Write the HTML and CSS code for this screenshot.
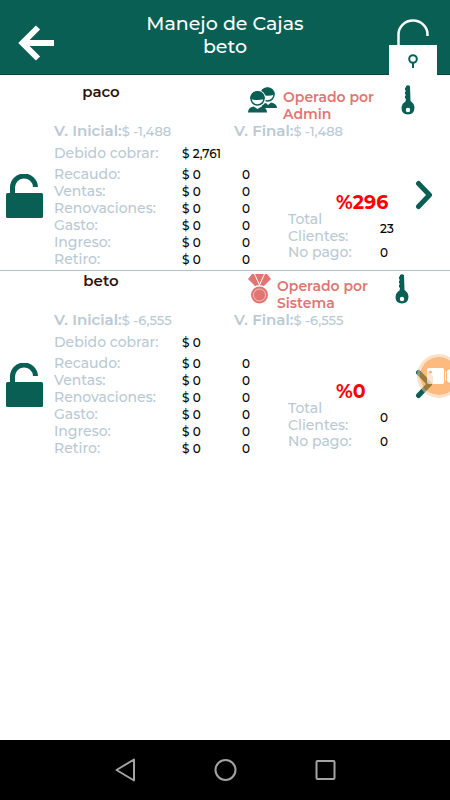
FILE: index.html
```html
<!DOCTYPE html>
<html lang="es">
<head>
<meta charset="utf-8">
<meta name="viewport" content="width=device-width, initial-scale=1">
<title>Manejo de Cajas</title>
<link rel="stylesheet" href="styles.css">
</head>
<body>
<svg class="defs" aria-hidden="true">
  <symbol id="open-lock" viewBox="0 0 38 44">
    <path d="M6.500 20V14A11 11 0 0 1 29.500 13" fill="none" stroke="currentColor" stroke-width="5"/>
    <rect y="19" width="37" height="25" rx="1.500" fill="currentColor"/>
  </symbol>
  <symbol id="key" viewBox="0 0 14 30">
    <path fill="currentColor" fill-rule="evenodd" d="M5 1Q7-.5 9 1L9.500 16Q13.500 18.500 13.500 23Q13 29.500 7 29.500Q.5 29 .5 23Q.7 18.500 4.500 16.500L5 14L4 13V11L5 10L4 9V7L5 6L4 5V3L5 2ZM7 22.800A2.200 2.200 0 1 0 7 27.200A2.200 2.200 0 1 0 7 22.800Z"/>
  </symbol>
  <symbol id="chevron" viewBox="0 0 18 30">
    <path d="M3.500 3.500L14.500 15L3.500 26.500" fill="none" stroke="currentColor" stroke-width="5" stroke-linecap="round" stroke-linejoin="round"/>
  </symbol>
</svg>

<header class="topbar">
  <button class="icon-button" aria-label="Volver">
    <svg width="36" height="36" viewBox="0 0 36 36"><path d="M20 2.500L4.500 18L20 33.500M5 18H36" fill="none" stroke="#fff" stroke-width="6"/></svg>
  </button>
  <h1 class="title">Manejo de Cajas<br>beto</h1>
  <button class="icon-button topbar-lock" aria-label="Abrir cajas">
    <svg width="48" height="56" viewBox="0 0 48 56">
      <path d="M9.500 27V15.500A14.500 14 0 0 1 38.500 15.500V17" fill="none" stroke="#fff" stroke-width="2.500"/>
      <path d="M0 26H48V56H0Z" fill="#fff"/>
      <circle cx="24" cy="40" r="3.800" fill="none" stroke="#0a5f54" stroke-width="2"/>
      <path d="M24 43V49" stroke="#0a5f54" stroke-width="2"/>
    </svg>
  </button>
</header>

<main class="boxes">
  <article class="box">
    <button class="icon-button box-lock" aria-label="Abrir caja paco"><svg width="38" height="44"><use href="#open-lock"/></svg></button>
    <div class="box-content">
      <div class="box-head">
        <h2 class="box-name">paco</h2>
        <div class="operator">
          <svg class="operator-icon" width="29" height="28" viewBox="0 0 29 28">
            <circle cx="19.500" cy="9.500" r="6.500" fill="#fff" stroke="#0a5f54" stroke-width="1.500"/>
            <path d="M12.500 9.500Q13 3 19.500 2.500Q26 3 26.500 9.500Q20 12 12.500 9.500Z" fill="#0a5f54"/>
            <path d="M14 23V19L18 18L20 20L23 17.500Q29 18.500 29 23Z" fill="#0a5f54"/>
            <circle cx="9.500" cy="13.500" r="8.500" fill="#fff"/>
            <circle cx="9.500" cy="13.500" r="6.500" fill="#fff" stroke="#0a5f54" stroke-width="1.500"/>
            <path d="M2.500 14Q2 6.500 9.500 6Q17 6.500 16.500 14Q9.500 16 2.500 14Z" fill="#0a5f54"/>
            <path d="M0 27.500Q0 22.500 5.500 21.500L9.500 24L13.500 21.500Q19 22.500 19 27.500Z" fill="#0a5f54"/>
          </svg>
          <p class="operator-name">Operado por<br>Admin</p>
          <button class="icon-button" aria-label="Clave de paco"><svg width="14" height="30"><use href="#key"/></svg></button>
        </div>
      </div>
      <dl class="amounts">
        <div class="amount"><dt>V. Inicial:</dt><dd>$ -1,488</dd></div>
        <div class="amount"><dt>V. Final:</dt><dd>$ -1,488</dd></div>
      </dl>
      <div class="details">
        <table class="ledger">
          <tbody>
            <tr class="due"><th scope="row">Debido cobrar:</th><td>$ 2,761</td><td></td></tr>
            <tr><th scope="row">Recaudo:</th><td>$ 0</td><td>0</td></tr>
            <tr><th scope="row">Ventas:</th><td>$ 0</td><td>0</td></tr>
            <tr><th scope="row">Renovaciones:</th><td>$ 0</td><td>0</td></tr>
            <tr><th scope="row">Gasto:</th><td>$ 0</td><td>0</td></tr>
            <tr><th scope="row">Ingreso:</th><td>$ 0</td><td>0</td></tr>
            <tr><th scope="row">Retiro:</th><td>$ 0</td><td>0</td></tr>
          </tbody>
        </table>
        <div class="summary">
          <p class="percent">%296</p>
          <dl class="clients">
            <dt>Total<br>Clientes:</dt><dd>23</dd>
            <dt>No pago:</dt><dd>0</dd>
          </dl>
        </div>
      </div>
    </div>
    <button class="icon-button box-open" aria-label="Ver caja paco"><svg width="18" height="30"><use href="#chevron"/></svg></button>
  </article>

  <article class="box">
    <button class="icon-button box-lock" aria-label="Abrir caja beto"><svg width="38" height="44"><use href="#open-lock"/></svg></button>
    <div class="box-content">
      <div class="box-head">
        <h2 class="box-name">beto</h2>
        <div class="operator">
          <svg class="operator-icon" width="23" height="30" viewBox="0 0 23 30">
            <path d="M4 0H19L23 5L15 13H8L0 5Z" fill="#e07572"/>
            <path d="M6.500 0L11.500 11L16.500 0" fill="none" stroke="#fff"/>
            <circle cx="11.500" cy="20.500" r="9.500" fill="#fff"/>
            <circle cx="11.500" cy="21" r="8.500" fill="#e07572"/>
            <circle cx="11.500" cy="21" r="6" fill="none" stroke="#f6d2d1" stroke-width=".8"/>
          </svg>
          <p class="operator-name">Operado por<br>Sistema</p>
          <button class="icon-button" aria-label="Clave de beto"><svg width="14" height="30"><use href="#key"/></svg></button>
        </div>
      </div>
      <dl class="amounts">
        <div class="amount"><dt>V. Inicial:</dt><dd>$ -6,555</dd></div>
        <div class="amount"><dt>V. Final:</dt><dd>$ -6,555</dd></div>
      </dl>
      <div class="details">
        <table class="ledger">
          <tbody>
            <tr class="due"><th scope="row">Debido cobrar:</th><td>$ 0</td><td></td></tr>
            <tr><th scope="row">Recaudo:</th><td>$ 0</td><td>0</td></tr>
            <tr><th scope="row">Ventas:</th><td>$ 0</td><td>0</td></tr>
            <tr><th scope="row">Renovaciones:</th><td>$ 0</td><td>0</td></tr>
            <tr><th scope="row">Gasto:</th><td>$ 0</td><td>0</td></tr>
            <tr><th scope="row">Ingreso:</th><td>$ 0</td><td>0</td></tr>
            <tr><th scope="row">Retiro:</th><td>$ 0</td><td>0</td></tr>
          </tbody>
        </table>
        <div class="summary">
          <p class="percent">%0</p>
          <dl class="clients">
            <dt>Total<br>Clientes:</dt><dd>0</dd>
            <dt>No pago:</dt><dd>0</dd>
          </dl>
        </div>
      </div>
    </div>
    <button class="icon-button box-open" aria-label="Ver caja beto"><svg width="18" height="30"><use href="#chevron"/></svg></button>
  </article>

  <button class="icon-button recorder" aria-label="Grabar pantalla">
    <svg width="33" height="44" viewBox="0 0 33 44">
      <circle cx="22" cy="22" r="20.500" fill="none" stroke="#fac79b" stroke-opacity=".55" stroke-width="3"/>
      <circle cx="22" cy="22" r="19" fill="#fa8c28" fill-opacity=".6"/>
      <rect x="10" y="14" width="17" height="16" rx="2" fill="#fff" fill-opacity=".65"/>
      <path d="M12 14H25Q27 14 27 16V28Q27 30 25 30H16V22L10 16Q10 14 12 14Z" fill="#fff"/>
      <path d="M28 18L29 17V27L28 26ZM30 17L33 15V29L30 27Z" fill="#fff"/>
      <circle cx="13.500" cy="18" r="1.500" fill="#fbb273"/>
    </svg>
  </button>
</main>

<nav class="system-nav" aria-label="Sistema">
  <button class="icon-button" aria-label="Atrás"><svg width="24" height="26" viewBox="0 0 24 26"><path d="M21 2.500V23.500L3.500 13Z" fill="none" stroke="#a3a3a3" stroke-width="2" stroke-linejoin="round"/></svg></button>
  <button class="icon-button" aria-label="Inicio"><svg width="24" height="26" viewBox="0 0 24 26"><circle cx="12.500" cy="13" r="10" fill="none" stroke="#a3a3a3" stroke-width="2"/></svg></button>
  <button class="icon-button" aria-label="Recientes"><svg width="24" height="26" viewBox="0 0 24 26"><rect x="3.500" y="4" width="18" height="18" rx="1" fill="none" stroke="#a3a3a3" stroke-width="2"/></svg></button>
</nav>
</body>
</html>
```
FILE: styles.css
```css
* {
  box-sizing: border-box;
  margin: 0;
  padding: 0;
}

body {
  display: flex;
  flex-direction: column;
  min-height: 100vh;
  background: #fff;
  color: #000;
  font-family: Montserrat, Inter, sans-serif;
  font-size: 12px;
  font-weight: 500;
}

.defs {
  position: absolute;
  width: 0;
  height: 0;
}

svg {
  display: block;
}

.icon-button {
  border: 0;
  background: none;
  color: #0a5f54;
}

.topbar {
  display: grid;
  grid-template-columns: 48px 1fr 48px;
  align-items: center;
  padding: 12px 13px 0 18px;
  background: #0a5f54;
  border-bottom: 1px solid #07473f;
}

.topbar-lock {
  align-self: end;
  margin: 7px 0 -1px;
}

.title {
  padding: 0 5px 16px 0;
  color: #fff;
  font-size: 19px;
  font-weight: 500;
  line-height: 23px;
  text-align: center;
}

.boxes {
  position: relative;
  flex: 1;
  padding-top: 7px;
  overflow: hidden;
}

.box {
  display: grid;
  grid-template-columns: 54px 1fr 35px;
  border-bottom: 1px solid #afc0ce;
}

.box:last-of-type {
  border-bottom: 0;
}

.box-lock {
  justify-self: start;
  align-self: center;
  padding: 40px 0 0 6px;
}

.box-open {
  justify-self: start;
  align-self: center;
  padding-top: 38px;
}

.box-head {
  display: grid;
  grid-template-columns: 94px 1fr;
  column-gap: 100px;
}

.box-name {
  color: #301008;
  font-size: 15px;
  font-weight: 600;
  line-height: 19px;
  text-align: center;
}

.operator {
  display: flex;
  gap: 6px;
  height: 40px;
  padding-top: 3px;
  white-space: nowrap;
}

.operator-icon {
  flex: none;
}

.operator-name {
  width: 112px;
  padding-top: 4px;
  color: #e07572;
  font-size: 14px;
  font-weight: 600;
  line-height: 17px;
}

.operator .icon-button {
  align-self: start;
}

.amounts {
  display: grid;
  grid-template-columns: 180px 1fr;
  line-height: 18px;
  color: #b9c9d4;
}

.amount {
  display: flex;
}

.amount dt {
  font-size: 15px;
  font-weight: 600;
}

.amount dd {
  font-size: 13px;
}

.details {
  display: flex;
}

.ledger {
  width: 234px;
  flex: none;
  table-layout: fixed;
  border-collapse: collapse;
  line-height: 17px;
  text-align: left;
}

.ledger th {
  width: 128px;
  color: #b9c9d4;
  font-size: 14px;
  font-weight: 500;
}

.ledger td {
  width: 60px;
}

.ledger td:last-child {
  width: 46px;
}

.ledger .due > * {
  height: 26px;
}

.ledger tr:last-child > * {
  height: 19px;
  padding-bottom: 2px;
}

.summary {
  flex: 1;
  padding-top: 54px;
}

.percent {
  padding-left: 48px;
  color: #f00;
  font-size: 19px;
  font-weight: 700;
  line-height: 17px;
}

.clients {
  display: grid;
  grid-template-columns: 92px 1fr;
  align-items: center;
  line-height: 15px;
}

.clients dt {
  color: #b9c9d4;
  font-size: 14px;
  line-height: 17px;
}

.clients dt:last-of-type {
  line-height: 15px;
}

.recorder {
  position: absolute;
  top: 279px;
  right: 0;
}

.system-nav {
  display: flex;
  justify-content: center;
  align-items: center;
  gap: 76px;
  height: 60px;
  background: #000;
}
```
